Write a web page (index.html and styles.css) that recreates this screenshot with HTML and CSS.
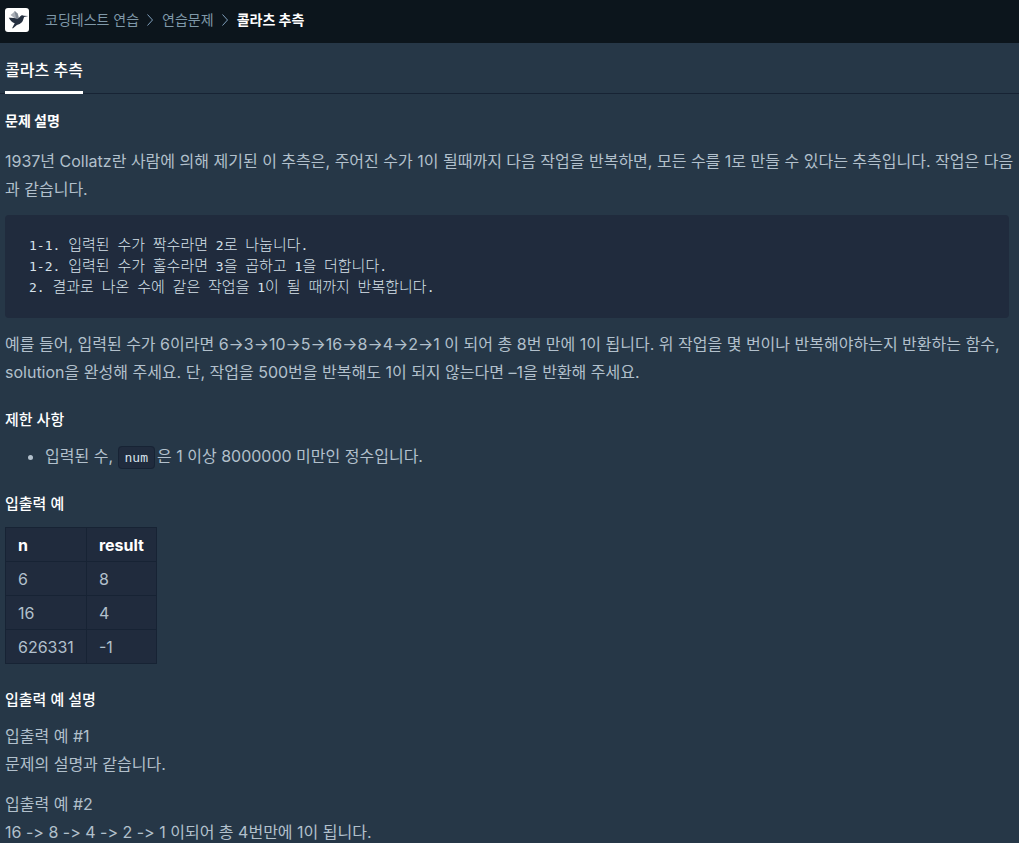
FILE: index.html
```html
<!DOCTYPE html>
<html lang="ko">
<head>
<meta charset="utf-8">
<title>콜라츠 추측</title>
<link rel="stylesheet" href="styles.css">
</head>
<body>
<header class="topbar">
  <a class="logo" href="#" aria-label="홈">
    <svg viewBox="0 0 24 24" width="24" height="24" aria-hidden="true">
      <rect width="24" height="24" rx="3" fill="#fff"/>
      <path d="M5.500 7 8 5l2-2 3 3 1 5-4-.5z" fill="#a9aeb6"/>
      <path d="M9.500 3l3 2.500 1.500 5.500-3-1z" fill="#808893"/>
      <path d="M3.800 9.800c3-.2 6 .2 8.700.9 1.500-.5 2.500-2.800 3.800-3.300 1-.4 1.800-.2 2.500.3l4.400.4-4.100.8c-.7 1.800-.8 3.500-2 5-1.400 1.800-3.500 2.200-5.200 3L7.800 20.500l-.6-.4 2.500-4.800c-2.300-.8-4.700-3-5.900-5.500z" fill="#263040"/>
    </svg>
  </a>
  <nav aria-label="경로">
    <ol class="crumbs">
      <li><a href="#">코딩테스트 연습</a></li>
      <li><svg class="chevron" viewBox="0 0 6 12" aria-hidden="true"><path d="M.5.5 5.500 6 .5 11.500"/></svg><a href="#">연습문제</a></li>
      <li class="current" aria-current="page"><svg class="chevron" viewBox="0 0 6 12" aria-hidden="true"><path d="M.5.5 5.500 6 .5 11.500"/></svg>콜라츠 추측</li>
    </ol>
  </nav>
</header>
<nav class="tabs"><a class="tab" href="#">콜라츠 추측</a></nav>
<main class="guide">
  <h1 class="title">문제 설명</h1>
  <p>1937년 Collatz란 사람에 의해 제기된 이 추측은, 주어진 수가 1이 될때까지 다음 작업을 반복하면, 모든 수를 1로 만들 수 있다는 추측입니다. 작업은 다음과 같습니다.</p>
<pre class="steps">1-1. <b>입력된</b> <b>수가</b> <b>짝수라면</b> 2<b>로</b> <b>나눕니다</b>.
1-2. <b>입력된</b> <b>수가</b> <b>홀수라면</b> 3<b>을</b> <b>곱하고</b> 1<b>을</b> <b>더합니다</b>.
2. <b>결과로</b> <b>나온</b> <b>수에</b> <b>같은</b> <b>작업을</b> 1<b>이</b> <b>될</b> <b>때까지</b> <b>반복합니다</b>.
</pre>
  <p>예를 들어, 입력된 수가 6이라면 6→3→10→5→16→8→4→2→1 이 되어 총 8번 만에 1이 됩니다. 위 작업을 몇 번이나 반복해야하는지 반환하는 함수, solution을 완성해 주세요. 단, 작업을 500번을 반복해도 1이 되지 않는다면 –1을 반환해 주세요.</p>
  <h2 class="section">제한 사항</h2>
  <ul class="limits"><li>입력된 수, <code>num</code>은 1 이상 8000000 미만인 정수입니다.</li></ul>
  <h2 class="section">입출력 예</h2>
  <table class="examples">
    <thead><tr><th scope="col">n</th><th scope="col">result</th></tr></thead>
    <tbody>
      <tr><td>6</td><td>8</td></tr>
      <tr><td>16</td><td>4</td></tr>
      <tr><td>626331</td><td>-1</td></tr>
    </tbody>
  </table>
  <h2 class="section">입출력 예 설명</h2>
  <p>입출력 예 #1<br>문제의 설명과 같습니다.</p>
  <p>입출력 예 #2<br>16 -&gt; 8 -&gt; 4 -&gt; 2 -&gt; 1 이되어 총 4번만에 1이 됩니다.</p>
</main>
</body>
</html>
```
FILE: styles.css
```css
* { box-sizing: border-box; }
body {
  margin: 0;
  background: #263747;
  color: #b2c0cc;
  font: 16px/28px Inter, "Noto Sans CJK KR", sans-serif;
}
a { color: inherit; text-decoration: none; }
.topbar {
  display: flex;
  align-items: center;
  gap: 16px;
  height: 43px;
  padding: 0 5px 3px;
  background: #0c151c;
}
.logo svg { display: block; }
.crumbs {
  display: flex;
  gap: 8px;
  margin: 0;
  padding: 0;
  list-style: none;
  font-size: 14px;
  line-height: 24px;
  color: #7f98a8;
}
.crumbs li { display: flex; align-items: center; gap: 9px; }
.crumbs .current { color: #fff; font-weight: 700; }
.chevron { width: 6px; height: 12px; fill: none; stroke: #7f9fbc; }
.tabs {
  display: flex;
  height: 51px;
  padding: 0 5px;
  border-bottom: 1px solid #172334;
}
.tab {
  height: 51px;
  padding-top: 13px;
  border-bottom: 3px solid #fff;
  color: #fff;
  font-weight: 500;
}
.guide { padding: 15px 0 0 5px; }
.title {
  margin: 0 0 14px;
  color: #fff;
  font-size: 14px;
  line-height: 24px;
  font-weight: 700;
}
p { margin: 0 0 12px; }
.steps {
  margin: 0 10px 12px 0;
  padding: 20px 24px;
  border-radius: 4px;
  background: #202b3d;
  color: #d7e2eb;
  font: 13px/21px "DejaVu Sans Mono", "Noto Sans CJK KR", monospace;
  overflow-x: auto;
}
.steps b {
  font: 300 15px/1 "Noto Sans CJK KR", sans-serif;
}
.section {
  margin: 22px 0 10px;
  color: #fff;
  font-size: 15px;
  line-height: 24px;
  font-weight: 500;
}
.limits { margin: 0; padding-left: 40px; }
code {
  margin: 0 2px 0 0;
  padding: 3px 6px;
  border: 1px solid #172334;
  border-radius: 4px;
  background: #202b3d;
  color: #d7e2eb;
  font: 13px "DejaVu Sans Mono", monospace;
}
.examples {
  margin: 11px 0 24px;
  border-collapse: collapse;
  background: #202b3d;
  line-height: 24px;
}
.examples th, .examples td {
  padding: 5px 12px 4px;
  border: 1px solid #172334;
  text-align: left;
}
.examples th { color: #fff; font-weight: 700; }
```
